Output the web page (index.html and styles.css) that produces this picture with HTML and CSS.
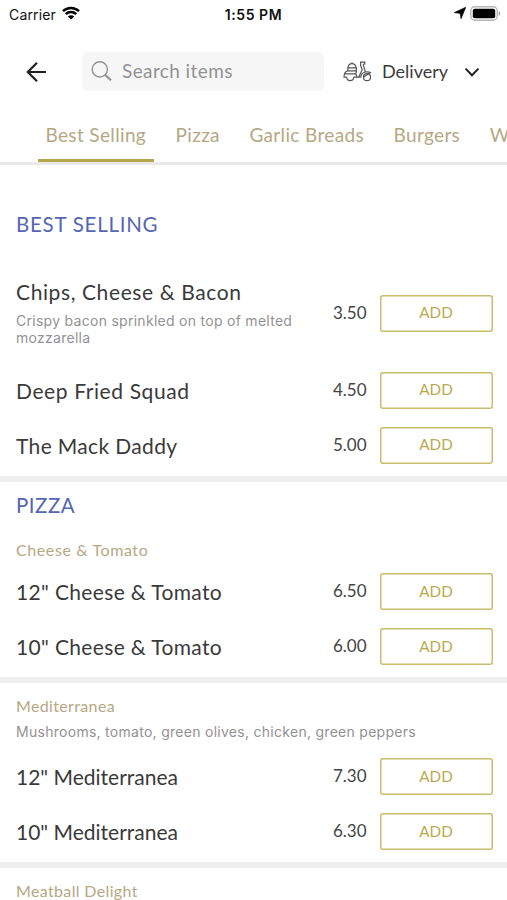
FILE: index.html
```
<!DOCTYPE html>
<html lang="en">
<head>
	<meta charset="UTF-8">
	<meta name="viewport" content="width=device-width, initial-scale=1.0">
	<title>Menu</title>
	<link rel="stylesheet" href="styles.css">
</head>
<body>

<div class="statusBar">
	<div class="carrier">
		<span>Carrier</span>
		<svg class="wifi" width="18" height="14" viewBox="0 0 18 14">
			<path d="M1 5.2a11.5 11.5 0 0 1 16 0M3.8 8.2a7.5 7.5 0 0 1 10.4 0" fill="none" stroke="#000" stroke-width="2.5"/>
			<path d="M9 13.6L5.8 10.5a4.6 4.6 0 0 1 6.4 0z"/>
		</svg>
	</div>
	<div class="clock">1:55 PM</div>
	<div class="power">
		<svg width="12" height="12" viewBox="0 0 12 12"><path d="M11.8.2L7 11.8 6.2 6.4.2 5.6z" stroke="#000" stroke-width=".6"/></svg>
		<svg width="31" height="15" viewBox="0 0 31 15">
			<rect x=".8" y=".8" width="26.4" height="13.4" rx="4" fill="#fff" stroke="#b5b5b5" stroke-width="1.4"/>
			<rect x="2.8" y="2.8" width="22.4" height="9.4" rx="2"/>
			<path d="M28.6 5v5a2.7 2.7 0 0 0 0-5z" fill="#aaa"/>
		</svg>
	</div>
</div>

<div class="header">
	<svg class="back" width="22" height="22" viewBox="0 0 22 22"><path d="M20 11H2M11 1.8L1.8 11l9.2 9.2"/></svg>
	<div class="search">
		<svg width="22" height="22" viewBox="0 0 22 22">
			<circle cx="8.8" cy="8.4" r="7.6" stroke-width="1.4"/>
			<path d="M14.2 14l5.8 5.2" stroke-width="2.2"/>
		</svg>
		<span>Search items</span>
	</div>
	<div class="delivery">
		<svg class="scooter" width="29" height="21" viewBox="0 0 29 21">
			<path d="M3.8 16.2H1c0-3.6 1.6-6 4-6.4M10.6 16.2a3.4 3.4 0 0 1-6.8 0M4.8 9.8V6.8h8.6v3zM5 6.8c.2-2.6 1.8-4.2 4-4.2s3.8 1.6 4 4.2M9 2.6V1.2M2.2 12.8h10.6l.8-3M12.8 12.8l1.2 3.4M10.6 16.2h7.2c.2-2.8 2-4.8 4.6-5.2l-2-6.6c-.2-1 .4-1.6 1.4-1.6V1.2h-4.2v3.2l1.6 4.4-3.4 7.2M20.4 16.2l7-4.6c-1.2-.8-3-1-5-.6"/>
			<circle cx="24" cy="16.2" r="3.5"/>
		</svg>
		<span>Delivery</span>
		<svg class="chevron" width="16" height="10" viewBox="0 0 16 10"><path d="M1.6 1.6L8 8.2l6.4-6.6"/></svg>
	</div>
</div>

<div class="tabs">
	<div class="tab active">Best Selling</div>
	<div class="tab">Pizza</div>
	<div class="tab">Garlic Breads</div>
	<div class="tab">Burgers</div>
	<div class="tab last">W</div>
</div>

<div class="section">
	<h2 class="title first">BEST SELLING</h2>
	<div class="row tall">
		<div class="info">
			<div class="name wide">Chips, Cheese &amp; Bacon</div>
			<p class="desc">Crispy bacon sprinkled on top of melted mozzarella</p>
		</div>
		<div class="price">3.50</div>
		<button class="add">ADD</button>
	</div>
	<div class="row">
		<div class="name wide">Deep Fried Squad</div>
		<div class="price">4.50</div>
		<button class="add">ADD</button>
	</div>
	<div class="row">
		<div class="name mid">The Mack Daddy</div>
		<div class="price">5.00</div>
		<button class="add">ADD</button>
	</div>
</div>

<div class="section">
	<h2 class="title">PIZZA</h2>
	<h3 class="group wide">Cheese &amp; Tomato</h3>
	<div class="row">
		<div class="name mid">12" Cheese &amp; Tomato</div>
		<div class="price">6.50</div>
		<button class="add">ADD</button>
	</div>
	<div class="row">
		<div class="name mid">10" Cheese &amp; Tomato</div>
		<div class="price">6.00</div>
		<button class="add">ADD</button>
	</div>
</div>

<div class="section">
	<h3 class="group mid">Mediterranea</h3>
	<p class="desc groupDesc">Mushrooms, tomato, green olives, chicken, green peppers</p>
	<div class="row">
		<div class="name">12" Mediterranea</div>
		<div class="price">7.30</div>
		<button class="add">ADD</button>
	</div>
	<div class="row">
		<div class="name">10" Mediterranea</div>
		<div class="price">6.30</div>
		<button class="add">ADD</button>
	</div>
</div>

<div class="section">
	<h3 class="group mid">Meatball Delight</h3>
</div>

</body>
</html>
```
FILE: styles.css
```
*{
	margin: 0;
	padding: 0;
	box-sizing: border-box;
}

body{
	height: 900px;
	overflow: hidden;
	background: #fff;
	color: #3a3a3a;
	font-family: Lato, "Liberation Sans", sans-serif;
}

svg{
	flex: none;
	display: block;
}

/* status bar */
.statusBar{
	display: grid;
	grid-template-columns: 1fr auto 1fr;
	align-items: center;
	height: 28px;
	padding: 0 6px 0 9px;
	font: 14px Inter, sans-serif;
	color: #111;
}

.carrier,
.power{
	display: flex;
	align-items: center;
	gap: 6px;
}

.carrier{
	letter-spacing: .15px;
}

.wifi{
	margin-top: -2px;
}

.clock{
	margin-left: -3px;
	font-weight: 600;
	letter-spacing: .55px;
}

.power{
	justify-content: flex-end;
	gap: 4px;
	margin-top: -2px;
}

/* header */
.header{
	display: flex;
	align-items: center;
	height: 87px;
	padding: 0 27px 0 26px;
	font-size: 19px;
}

.back{
	fill: none;
	stroke: #222;
	stroke-width: 2.2;
}

.search{
	display: flex;
	align-items: center;
	gap: 9px;
	width: 242px;
	height: 39px;
	margin-left: 34px;
	padding-left: 9px;
	border-radius: 6px;
	background: #f6f6f6;
	color: #929292;
	letter-spacing: .4px;
}

.search span,
.delivery span{
	margin-top: -2px;
}

.search svg{
	fill: none;
	stroke: #929292;
}

.delivery{
	display: flex;
	flex: 1;
	align-items: center;
	margin-left: 19px;
	font-size: 18px;
}

.scooter{
	margin-right: 10px;
	fill: none;
	stroke: #555;
	stroke-width: 1.2;
}

.chevron{
	margin-left: auto;
	fill: none;
	stroke: #222;
	stroke-width: 2;
}

/* category tabs */
.tabs{
	display: flex;
	height: 50px;
	padding-left: 38px;
	gap: 14.5px;
	border-bottom: 3px solid #e9e9e9;
	white-space: nowrap;
	overflow: hidden;
}

.tab{
	height: 48px;
	padding: 0 7.5px;
	color: #b5a883;
	font-size: 19px;
	letter-spacing: .35px;
	line-height: 39px;
}

.active{
	border-bottom: 4px solid #b5a64a;
	border-radius: 1px;
}

.last{
	padding-right: 0;
	letter-spacing: 0;
}

/* menu */
.section{
	padding: 0 14.5px 3px 16px;
	border-bottom: 6px solid #eee;
}

.title{
	height: 46px;
	color: #5566b5;
	font-size: 20.5px;
	font-weight: 400;
	letter-spacing: .5px;
	line-height: 46px;
}

.first{
	margin: 30px 0 8.5px;
	height: 60px;
	letter-spacing: .75px;
	line-height: 59px;
}

.group{
	padding-top: 8.5px;
	color: #b5a883;
	font-size: 16px;
	font-weight: 400;
	line-height: 28px;
}

.row{
	display: flex;
	align-items: center;
	height: 55px;
}

.tall{
	height: 99px;
}

.info{
	width: 300px;
	margin-top: -2px;
}

.name{
	font-size: 21px;
	line-height: 28px;
}

.row > .name{
	padding-top: 1px;
}

.wide{
	letter-spacing: .6px;
}

.mid{
	letter-spacing: .35px;
}

.desc{
	margin-top: 6px;
	color: #929292;
	font: 14px/17.5px Inter, sans-serif;
	letter-spacing: .28px;
}

.groupDesc{
	margin: 3.5px 0 8.5px;
}

.price{
	margin-left: auto;
	margin-top: -2px;
	color: #444;
	font-size: 17px;
}

.add{
	width: 113px;
	height: 37px;
	margin-left: 13px;
	padding-bottom: 2px;
	border: 0;
	border-radius: 3px;
	box-shadow: inset 0 0 0 1.5px #c9bc6c;
	background: #fff;
	color: #b9aa50;
	font: 15.2px Lato, sans-serif;
}
```
